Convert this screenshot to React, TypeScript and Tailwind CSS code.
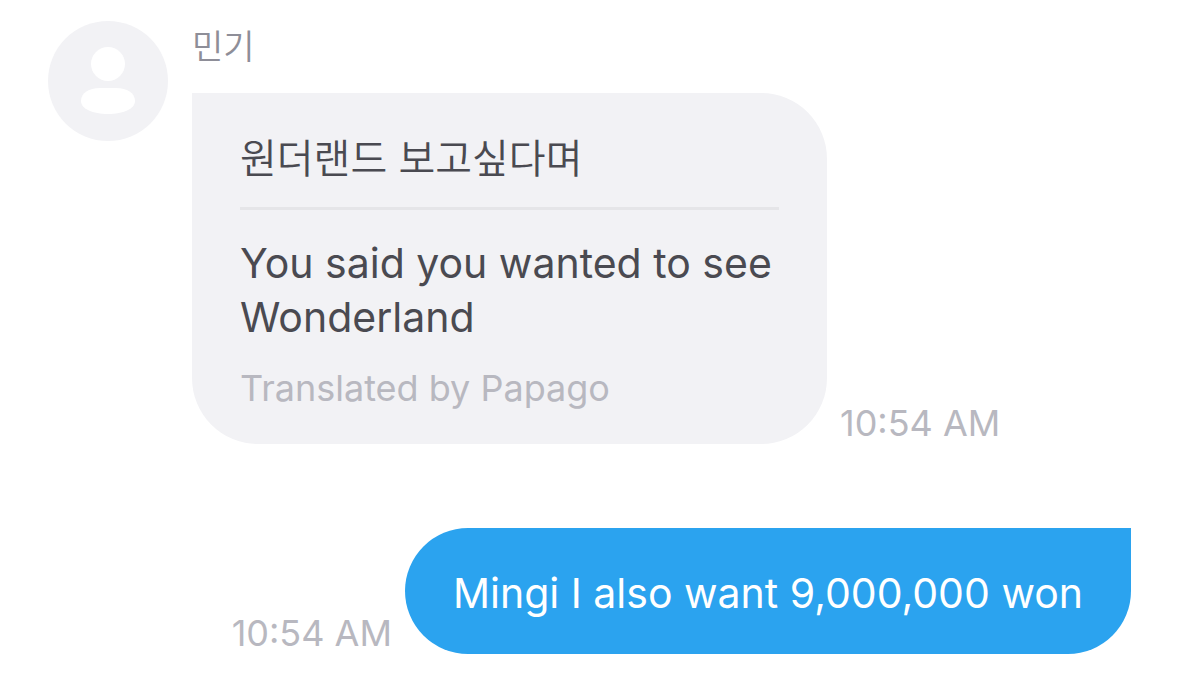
const UserIcon = () => (
  <svg viewBox="0 0 120 120" className="size-30 shrink-0" role="img" aria-label="Profile">
    <circle cx="60" cy="60" r="60" fill="#f2f2f5" />
    <circle cx="60" cy="43" r="17" fill="#fff" />
    <path d="M52 67h16c11 0 19 5 19 13S75 93 60 93 33 88 33 80s8-13 19-13z" fill="#fff" />
  </svg>
);

const Time = ({ value }: { value: string }) => (
  <time className="shrink-0 text-[36px] leading-[42px] text-[#b8b8c0]">{value}</time>
);

const IncomingMessage = () => (
  <article className="flex items-start gap-6">
    <UserIcon />
    <div className="min-w-0">
      <h2 className="h-18 pt-1 text-[34px] leading-11 font-[350] text-[#8e8e98]">민기</h2>
      <div className="flex items-end gap-[13px]">
        <div className="max-w-[635px] rounded-[66px] rounded-tl-none bg-[#f2f2f5] px-12 pt-10 pb-8 text-[#4a4a51]">
          <p className="border-b-3 border-[#e5e5e8] pb-[22px] text-[40px] leading-13 font-[350]">원더랜드 보고싶다며</p>
          <p className="pt-[26px] text-[41px] leading-[54px]">You said you wanted to see Wonderland</p>
          <p className="pt-5 text-[36px] leading-12 text-[#b8b8c0]">Translated by Papago</p>
        </div>
        <Time value="10:54 AM" />
      </div>
    </div>
  </article>
);

const OutgoingMessage = () => (
  <article className="flex items-end justify-end gap-[13px]">
    <Time value="10:54 AM" />
    <p className="rounded-[63px] rounded-tr-none bg-[#2ba3ef] px-12 pt-[38px] pb-[34px] text-[41px] leading-[54px] text-white">
      Mingi I also want 9,000,000 won
    </p>
  </article>
);

export default function App() {
  return (
    <main className="flex min-h-screen flex-col gap-21 bg-white px-12 pt-[21px] pb-9 font-['Inter','Noto_Sans_CJK_KR',sans-serif]">
      <IncomingMessage />
      <OutgoingMessage />
    </main>
  );
}
